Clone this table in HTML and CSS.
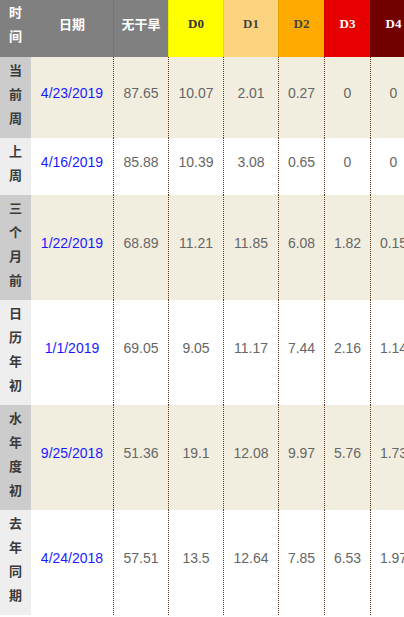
FILE: index.html
```html
<!DOCTYPE html>
<html lang="zh">
<head>
<meta charset="utf-8">
<title>干旱监测</title>
<link rel="stylesheet" href="styles.css">
</head>
<body>
<div class="wrap">
  <div class="grid">
    <div class="row head">
      <div class="c c-time">时<br>间</div>
      <div class="c c-date">日期</div>
      <div class="c c-num">无干旱</div>
      <div class="c c-num d0">D0</div>
      <div class="c c-num d1">D1</div>
      <div class="c c-sm d2">D2</div>
      <div class="c c-sm d3">D3</div>
      <div class="c c-sm d4">D4</div>
    </div>
    <div class="row alt">
      <div class="c c-time">当<br>前<br>周</div>
      <div class="c c-date">4/23/2019</div>
      <div class="c c-num">87.65</div>
      <div class="c c-num">10.07</div>
      <div class="c c-num">2.01</div>
      <div class="c c-sm">0.27</div>
      <div class="c c-sm">0</div>
      <div class="c c-sm">0</div>
    </div>
    <div class="row">
      <div class="c c-time">上<br>周</div>
      <div class="c c-date">4/16/2019</div>
      <div class="c c-num">85.88</div>
      <div class="c c-num">10.39</div>
      <div class="c c-num">3.08</div>
      <div class="c c-sm">0.65</div>
      <div class="c c-sm">0</div>
      <div class="c c-sm">0</div>
    </div>
    <div class="row alt">
      <div class="c c-time">三<br>个<br>月<br>前</div>
      <div class="c c-date">1/22/2019</div>
      <div class="c c-num">68.89</div>
      <div class="c c-num">11.21</div>
      <div class="c c-num">11.85</div>
      <div class="c c-sm">6.08</div>
      <div class="c c-sm">1.82</div>
      <div class="c c-sm">0.15</div>
    </div>
    <div class="row">
      <div class="c c-time">日<br>历<br>年<br>初</div>
      <div class="c c-date">1/1/2019</div>
      <div class="c c-num">69.05</div>
      <div class="c c-num">9.05</div>
      <div class="c c-num">11.17</div>
      <div class="c c-sm">7.44</div>
      <div class="c c-sm">2.16</div>
      <div class="c c-sm">1.14</div>
    </div>
    <div class="row alt">
      <div class="c c-time">水<br>年<br>度<br>初</div>
      <div class="c c-date">9/25/2018</div>
      <div class="c c-num">51.36</div>
      <div class="c c-num">19.1</div>
      <div class="c c-num">12.08</div>
      <div class="c c-sm">9.97</div>
      <div class="c c-sm">5.76</div>
      <div class="c c-sm">1.73</div>
    </div>
    <div class="row">
      <div class="c c-time">去<br>年<br>同<br>期</div>
      <div class="c c-date">4/24/2018</div>
      <div class="c c-num">57.51</div>
      <div class="c c-num">13.5</div>
      <div class="c c-num">12.64</div>
      <div class="c c-sm">7.85</div>
      <div class="c c-sm">6.53</div>
      <div class="c c-sm">1.97</div>
    </div>
  </div>
</div>
</body>
</html>
```

FILE: styles.css
```css
html, body {
  margin: 0;
  padding: 0;
  background: #fff;
}

.wrap {
  width: 404px;
  overflow: hidden;
}

.grid {
  width: 416px;
  display: flex;
  flex-direction: column;
  font-family: "Liberation Sans", Arial, "Noto Sans CJK SC", sans-serif;
  font-size: 14px;
  color: #666;
}

.row {
  display: flex;
  background: #fff;
}

.row.alt {
  background: #f2eedf;
}

.c {
  box-sizing: border-box;
  flex: none;
  display: flex;
  align-items: center;
  justify-content: center;
  text-align: center;
  padding: 0 0 9px;
  line-height: 24px;
}

.c-time {
  width: 31px;
  padding-top: 1px;
  padding-bottom: 8px;
  background: #eeeeee;
  color: #3a3a3a;
  font-family: "Noto Sans CJK SC", sans-serif;
  font-weight: bold;
  font-size: 13px;
  align-items: flex-start;
}

.row.alt .c-time {
  background: #cccccc;
}

.c-date {
  width: 82px;
  color: #1a1aff;
}

.c-num {
  width: 55px;
  border-left: 1px dotted #5c3a1e;
}

.c-sm {
  width: 46px;
  border-left: 1px dotted #5c3a1e;
}

/* header */
.row.head {
  background: #808080;
}

.row.head .c {
  padding: 0 0 9px;
  color: #fff;
  font-family: "Noto Sans CJK SC", sans-serif;
  font-weight: bold;
  font-size: 13px;
  border-left: 1px solid rgba(0, 0, 0, 0.08);
}

.row.head .c-time {
  background: #808080;
  border-left: none;
}

.row.head .c-date {
  border-left: none;
}

.row.head .d0,
.row.head .d1,
.row.head .d2,
.row.head .d3,
.row.head .d4 {
  font-family: "Liberation Serif", "Times New Roman", serif;
  font-size: 13px;
}

.row.head .d0 { background: #ffff00; color: #333; }
.row.head .d1 { background: #fcd37f; color: #444; }
.row.head .d2 { background: #ffaa00; color: #444; }
.row.head .d3 { background: #e60000; color: #fff; }
.row.head .d4 { background: #730000; color: #fff; }
```
